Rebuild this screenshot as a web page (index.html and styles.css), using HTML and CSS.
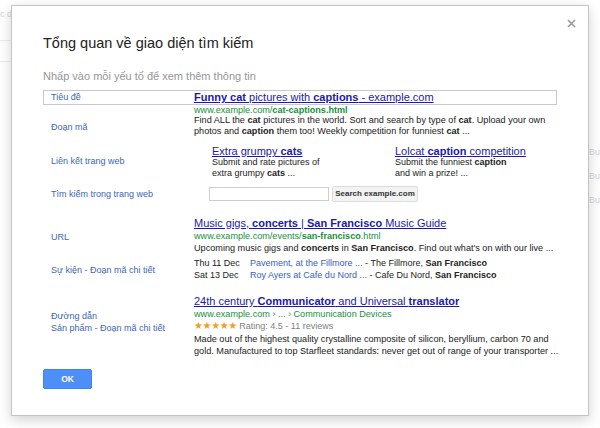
FILE: index.html
```html
<!DOCTYPE html>
<html lang="vi">
<head>
<meta charset="utf-8">
<title>Tổng quan về giao diện tìm kiếm</title>
<link rel="stylesheet" href="styles.css">
</head>
<body>
<div class="page">
  <div class="bg-left">
    <span class="bg-frag">c d</span>
    <span class="bg-line"></span>
    <span class="bg-line"></span>
  </div>
  <div class="bg-right">
    <span class="bg-frag">Bu</span>
    <span class="bg-frag">Bu</span>
    <span class="bg-frag">Bu</span>
  </div>
</div>

<div class="dialog">
  <button class="close" aria-label="Đóng">
    <svg width="9" height="9" viewBox="0 0 9 9"><path d="M1 1L8 8M8 1L1 8" stroke="#9a9a9a" stroke-width="1.6" fill="none"/></svg>
  </button>
  <h1 class="heading">Tổng quan về giao diện tìm kiếm</h1>
  <p class="sub">Nhấp vào mỗi yếu tố để xem thêm thông tin</p>

  <div class="rows">
    <div class="row row-boxed">
      <div class="label">Tiêu đề</div>
      <div class="content"><a class="rtitle"><b>Funny cat</b> pictures with <b>captions</b> - example.com</a></div>
    </div>

    <div class="row row-snippet">
      <div class="label lab-snippet">Đoạn mã</div>
      <div class="content">
        <div class="url url-first">www.example.com/<b>cat-captions.html</b></div>
        <div class="snip">Find ALL the <b>cat</b> pictures in the world. Sort and search by type of <b>cat</b>. Upload your own</div>
        <div class="snip">photos and <b>caption</b> them too! Weekly competition for funniest <b>cat</b> ...</div>
      </div>
    </div>

    <div class="row row-sitelinks">
      <div class="label lab-sitelinks">Liên kết trang web</div>
      <div class="content sitelinks">
        <div class="sitelink sl-1">
          <a class="sltitle">Extra grumpy <b>cats</b></a>
          <div class="snip">Submit and rate pictures of</div>
          <div class="snip">extra grumpy <b>cats</b> ...</div>
        </div>
        <div class="sitelink">
          <a class="sltitle">Lolcat <b>caption</b> competition</a>
          <div class="snip">Submit the funniest <b>caption</b></div>
          <div class="snip">and win a prize! ...</div>
        </div>
      </div>
    </div>

    <div class="row row-search">
      <div class="label lab-search">Tìm kiếm trong trang web</div>
      <div class="content search">
        <span class="sinput"></span>
        <span class="sbtn">Search example.com</span>
      </div>
    </div>

    <div class="row row-result2">
      <div class="label lab-url">URL</div>
      <div class="content">
        <a class="rtitle">Music gigs, <b>concerts</b> | <b>San Francisco</b> Music Guide</a>
        <div class="url url-2">www.example.com/events/<b>san-francisco</b>.html</div>
        <div class="snip lh12">Upcoming music gigs and <b>concerts</b> in <b>San Francisco</b>. Find out what's on with our live ...</div>
      </div>
    </div>

    <div class="row row-events">
      <div class="label lab-events">Sự kiện - Đoạn mã chi tiết</div>
      <div class="content">
        <div class="event"><span class="edate">Thu 11 Dec</span><span class="edesc"><a class="elink">Pavement, at the Fillmore ...</a> - The Fillmore, <b>San Francisco</b></span></div>
        <div class="event"><span class="edate">Sat 13 Dec</span><span class="edesc"><a class="elink">Roy Ayers at Cafe du Nord ...</a> - Cafe Du Nord, <b>San Francisco</b></span></div>
      </div>
    </div>

    <div class="row row-result3">
      <div class="label lab-product">
        <div>Đường dẫn</div>
        <div>Sản phẩm - Đoạn mã chi tiết</div>
      </div>
      <div class="content">
        <a class="rtitle">24th century <b>Communicator</b> and Universal <b>translator</b></a>
        <div class="url url-3">www.example.com › ... › Communication Devices</div>
        <div class="rating"><span class="stars">★★★★★</span> Rating: 4.5 - 11 reviews</div>
        <div class="snip lh12">Made out of the highest quality crystalline composite of silicon, beryllium, carbon 70 and</div>
        <div class="snip lh12">gold. Manufactured to top Starfleet standards: never get out of range of your transporter ...</div>
      </div>
    </div>
  </div>

  <button class="ok">OK</button>
</div>
</body>
</html>
```

FILE: styles.css
```css
* { box-sizing: border-box; }

html, body {
  margin: 0;
  padding: 0;
}

body {
  width: 600px;
  height: 428px;
  overflow: hidden;
  background: #ffffff;
  font-family: "Liberation Sans", Arial, sans-serif;
  position: relative;
}

/* faint page behind the dialog */
.page {
  display: flex;
  justify-content: space-between;
  width: 600px;
  height: 428px;
}

.bg-left {
  display: flex;
  flex-direction: column;
  width: 12px;
  padding-top: 8px;
  gap: 20px;
}

.bg-right {
  display: flex;
  flex-direction: column;
  width: 11px;
  padding-top: 146px;
  gap: 12px;
}

.bg-frag {
  font-size: 9px;
  line-height: 12px;
  color: #d4d4d4;
  white-space: nowrap;
}

.bg-line {
  display: block;
  height: 1px;
  width: 12px;
  background: #ececec;
}

/* dialog */
.dialog {
  position: absolute;
  left: 11px;
  top: 5px;
  width: 578px;
  height: 411px;
  background: #ffffff;
  border: 1px solid #c4c4c4;
  box-shadow: 0 4px 12px rgba(0, 0, 0, 0.18);
  padding: 27px 31px 0 31px;
}

.close {
  position: absolute;
  top: 12px;
  right: 11px;
  width: 11px;
  height: 11px;
  padding: 1px;
  border: 0;
  background: transparent;
  display: flex;
}

.heading {
  margin: 0;
  font-weight: normal;
  font-size: 14.5px;
  line-height: 20px;
  color: #222222;
}

.sub {
  margin: 16px 0 0 0;
  font-size: 11px;
  line-height: 14px;
  color: #959595;
}

.rows {
  margin-top: 7px;
  display: flex;
  flex-direction: column;
}

.row {
  display: flex;
  align-items: flex-start;
}

.label {
  flex: 0 0 151px;
  padding-left: 8px;
  font-size: 9px;
  line-height: 12px;
  color: #3c67b5;
  white-space: nowrap;
}

.content {
  flex: 1;
  min-width: 0;
  white-space: nowrap;
}

b { font-weight: bold; }

a { color: #1a1aa8; text-decoration: underline; }

.row-boxed {
  height: 15px;
  border: 1px solid #c9c9c9;
  align-items: center;
}

.row-boxed .label {
  flex-basis: 150px;
  padding-left: 7px;
  line-height: 13px;
}

.rtitle {
  display: block;
  font-size: 11px;
  line-height: 13px;
}

.url {
  font-size: 9.1px;
  color: #16913a;
}

.url-first { line-height: 10px; }
.url-2, .url-3 { line-height: 12px; }

.snip {
  font-size: 9.15px;
  line-height: 11px;
  color: #222222;
}

.lh12 { line-height: 12px; }

.lab-snippet { padding-top: 17px; line-height: 11px; }

.row-sitelinks { margin-top: 8px; }
.lab-sitelinks { padding-top: 10px; }

.sitelinks {
  display: flex;
  padding-left: 18px;
}

.sitelinks .snip { font-size: 9px; }

.sl-1 { width: 183px; }

.sltitle {
  display: block;
  font-size: 11px;
  line-height: 12px;
}

.row-search { margin-top: 7px; }
.lab-search { padding-top: 2px; }

.search {
  display: flex;
  align-items: center;
  padding-left: 15px;
  gap: 3px;
  height: 16px;
}

.sinput {
  display: block;
  width: 120px;
  height: 14px;
  border: 1px solid #cdcdcd;
  background: #fff;
}

.sbtn {
  display: block;
  width: 86px;
  height: 16px;
  padding: 0;
  text-align: center;
  font-size: 8px;
  line-height: 14px;
  font-weight: bold;
  color: #333;
  background: #f3f3f3;
  border: 1px solid #dcdcdc;
  border-radius: 2px;
}

.row-result2 { margin-top: 14.5px; }
.lab-url { padding-top: 14.5px; }

.row-events { margin-top: 3px; }
.lab-events { padding-top: 7px; }

.event {
  display: flex;
  font-size: 9px;
  line-height: 12px;
  color: #222;
}

.edate {
  width: 56px;
  flex: none;
}

.edesc { white-space: pre; }

.elink {
  color: #3a5ec4;
  text-decoration: none;
}

.row-result3 { margin-top: 14.5px; }
.lab-product { padding-top: 14.5px; }

.rating {
  font-size: 9px;
  line-height: 12.5px;
  color: #808080;
}

.stars {
  font-family: "DejaVu Sans", sans-serif;
  font-size: 10px;
  color: #f0a020;
  letter-spacing: -0.4px;
}

.ok {
  display: block;
  margin-top: 12px;
  width: 49px;
  height: 20px;
  border: 1px solid #3d82f0;
  border-radius: 2px;
  background: #4d8ff7;
  color: #ffffff;
  font-family: "Liberation Sans", Arial, sans-serif;
  font-size: 8.5px;
  font-weight: bold;
  padding: 0;
}
```
